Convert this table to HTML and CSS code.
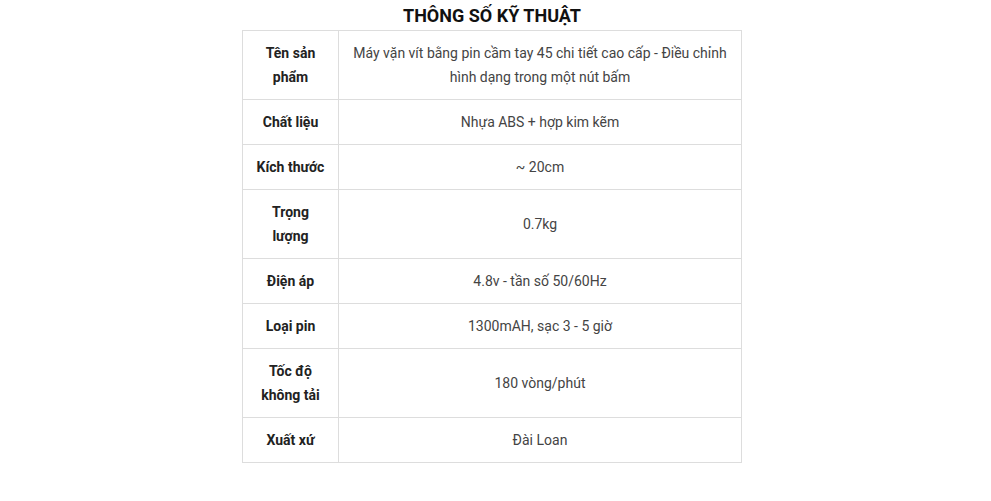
FILE: index.html
```html
<!DOCTYPE html>
<html lang="vi">
<head>
<meta charset="utf-8">
<title>Thông số kỹ thuật</title>
<link rel="stylesheet" href="styles.css">
</head>
<body>
<div class="wrap">
  <h2 class="title">THÔNG SỐ KỸ THUẬT</h2>
  <table class="spec">
    <colgroup><col class="c1"><col class="c2"></colgroup>
    <tbody>
      <tr><th>Tên sản phẩm</th><td>Máy vặn vít bằng pin cầm tay 45 chi tiết cao cấp - Điều chỉnh hình dạng trong một nút bấm</td></tr>
      <tr><th>Chất liệu</th><td>Nhựa ABS + hợp kim kẽm</td></tr>
      <tr><th>Kích thước</th><td>~ 20cm</td></tr>
      <tr><th>Trọng lượng</th><td>0.7kg</td></tr>
      <tr><th>Điện áp</th><td>4.8v - tần số 50/60Hz</td></tr>
      <tr><th>Loại pin</th><td>1300mAH, sạc 3 - 5 giờ</td></tr>
      <tr><th>Tốc độ không tải</th><td>180 vòng/phút</td></tr>
      <tr><th>Xuất xứ</th><td>Đài Loan</td></tr>
    </tbody>
  </table>
</div>
</body>
</html>
```

FILE: styles.css
```css
html, body {
  margin: 0;
  padding: 0;
  background: #fff;
}
body {
  font-family: Roboto, "Liberation Sans", Arial, sans-serif;
  color: #444;
}
.wrap {
  width: 984px;
}
.title {
  margin: 0;
  height: 30px;
  line-height: 32px;
  font-size: 18px;
  font-weight: 700;
  color: #111;
  text-align: center;
}
.spec {
  width: 500px;
  margin: 0 auto;
  border-collapse: collapse;
  table-layout: fixed;
  font-size: 14px;
  line-height: 24px;
}
.c1 { width: 96px; }
.spec th, .spec td {
  border: 1px solid #ddd;
  padding: 10px 10px;
  text-align: center;
  vertical-align: middle;
}
.spec th {
  font-weight: 700;
  color: #222;
}
.spec td {
  font-weight: 400;
  color: #444;
}
```
